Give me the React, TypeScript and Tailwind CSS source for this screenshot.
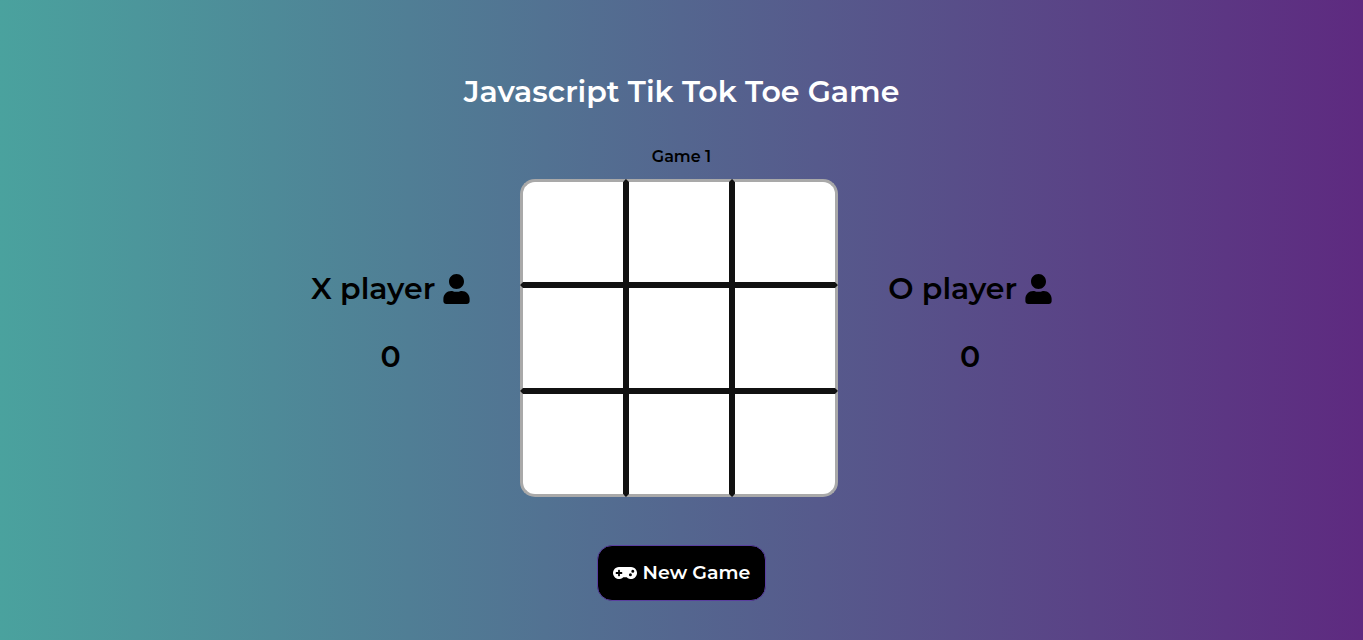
import { useState } from "react";
import { FaGamepad, FaUser } from "react-icons/fa";

const CELL_STYLES = [
  "rounded-tl-[15px] border-t-[#a9a9a9] border-l-[#a9a9a9]",
  "border-t-[#a9a9a9]",
  "rounded-tr-[15px] border-t-[#a9a9a9] border-r-[#a9a9a9]",
  "border-l-[#a9a9a9]",
  "",
  "border-r-[#a9a9a9]",
  "rounded-bl-[15px] border-b-[#a9a9a9] border-l-[#a9a9a9]",
  "border-b-[#a9a9a9]",
  "rounded-br-[15px] border-b-[#a9a9a9] border-r-[#a9a9a9]",
];

const LINES = [
  [0, 1, 2], [3, 4, 5], [6, 7, 8],
  [0, 3, 6], [1, 4, 7], [2, 5, 8],
  [0, 4, 8], [2, 4, 6],
];

type Mark = "X" | "O" | "";

function Player({ mark, score }: { mark: string; score: number }) {
  return (
    <section className="mb-[30px] flex flex-col items-center gap-7 text-3xl leading-10">
      <h2 className="flex items-center gap-2 whitespace-nowrap">
        {mark} player
        <FaUser className="h-[30px] w-[27px] shrink-0" aria-hidden="true" />
      </h2>
      <p>{score}</p>
    </section>
  );
}

export default function App() {
  const [cells, setCells] = useState<Mark[]>(Array(9).fill(""));
  const [turn, setTurn] = useState<"X" | "O">("X");
  const [game, setGame] = useState(1);
  const [score, setScore] = useState({ X: 0, O: 0 });
  const [over, setOver] = useState(false);

  const play = (index: number) => {
    if (over || cells[index]) return;
    const next = cells.map((mark, i) => (i === index ? turn : mark));
    setCells(next);
    if (LINES.some((line) => line.every((i) => next[i] === turn))) {
      setScore({ ...score, [turn]: score[turn] + 1 });
      setOver(true);
    }
    setTurn(turn === "X" ? "O" : "X");
  };

  const newGame = () => {
    setCells(Array(9).fill(""));
    setTurn("X");
    setOver(false);
    setGame(game + 1);
  };

  return (
    <main className="flex min-h-screen flex-col items-center bg-linear-to-r/srgb from-[#4aa29e] to-[#5e2a80] pt-18 pb-10 font-['Montserrat','Inter',sans-serif] font-semibold text-black">
      <h1 className="text-3xl leading-10 text-white">Javascript Tik Tok Toe Game</h1>
      <p className="mt-8 text-base leading-[26px]">Game {game}</p>
      <div className="mt-[9px] flex items-center justify-center gap-[50px]">
        <Player mark="X" score={score.X} />
        <div className="grid grid-cols-3">
          {cells.map((mark, i) => (
            <button
              key={i}
              type="button"
              aria-label={`Cell ${i + 1}`}
              onClick={() => play(i)}
              className={`size-[106px] border-3 border-[#111111] bg-white text-6xl ${CELL_STYLES[i]}`}
            >
              {mark}
            </button>
          ))}
        </div>
        <Player mark="O" score={score.O} />
      </div>
      <button
        type="button"
        onClick={newGame}
        className="mt-12 flex h-14 items-center gap-1.5 rounded-[15px] border border-[#5a3fa0] bg-black px-[15px] text-[19px] text-white"
      >
        <FaGamepad className="size-6" aria-hidden="true" />
        New Game
      </button>
    </main>
  );
}
